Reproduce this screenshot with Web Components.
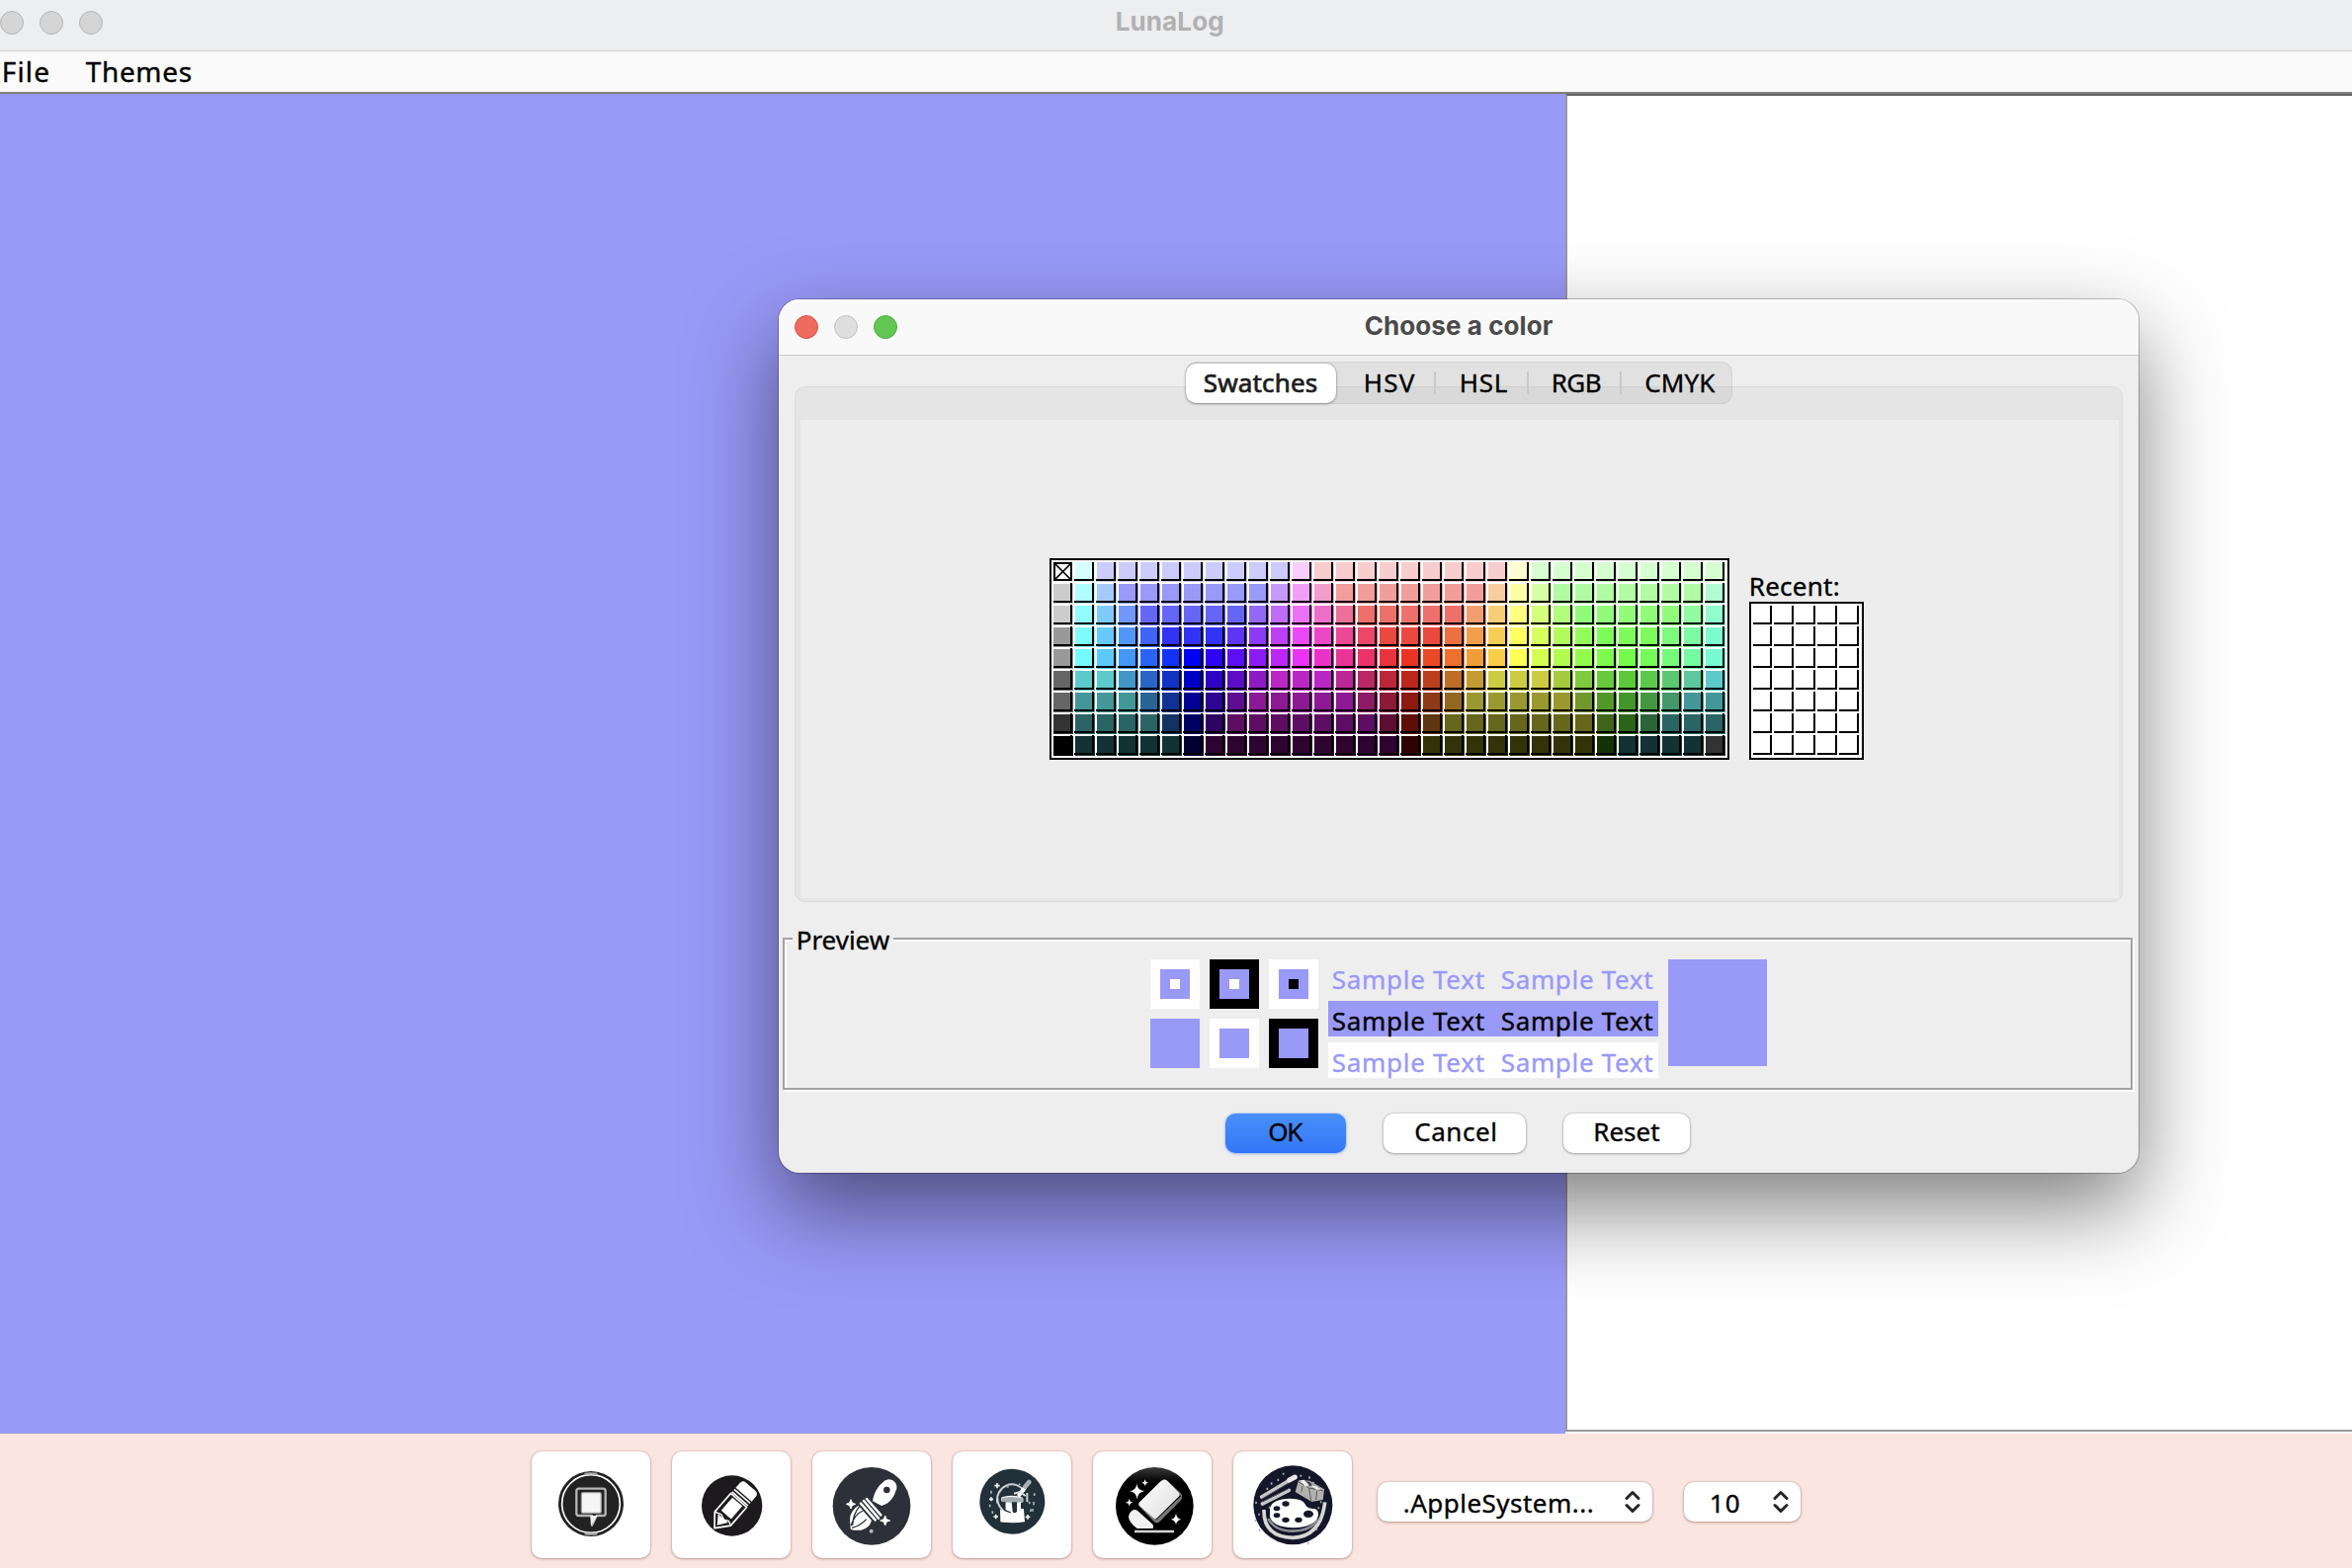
<!DOCTYPE html>
<html lang="en">
<head>
<meta charset="utf-8">
<title>LunaLog</title>
<style>
html,body{margin:0;height:100%;overflow:hidden;background:#fff}
body{font-family:"Noto Sans","Open Sans",sans-serif;font-size:26px;color:#000;-webkit-text-stroke:.35px}
</style>
</head>
<body>
<luna-app></luna-app>

<template id="t-app">
<style>
:host{display:flex;flex-direction:column;width:2380px;height:1587px;position:relative;overflow:hidden;--accent:#9999f8}
.work{flex:1;display:flex;min-height:0}
.canvas{width:1584px;background:var(--accent)}
.page{flex:1;background:#fff;box-sizing:border-box;border-left:2px solid #999;border-top:2px solid #666;margin-bottom:2px;border-bottom:2px solid #999}
color-dialog{position:absolute;left:788px;top:303px}
</style>
<main-title></main-title>
<menu-bar></menu-bar>
<div class="work"><div class="canvas"></div><div class="page"></div></div>
<tool-bar></tool-bar>
<color-dialog></color-dialog>
</template>

<template id="t-title">
<style>
:host{display:flex;height:52px;box-sizing:border-box;background:#edeef0;border-bottom:1px solid #cfd0d2;align-items:center;font:700 26px/36px Inter,sans-serif;color:#b1b1b2;-webkit-text-stroke:0}
window-dots{height:46px;align-self:flex-start}
fit-text{margin-left:1025px;margin-bottom:8px}
</style>
<window-dots off></window-dots>
<fit-text w="107.5">LunaLog</fit-text>
</template>

<template id="t-menu">
<style>
:host{display:flex;height:43px;box-sizing:border-box;background:#fafafa;border-bottom:2px solid #808080;font-size:28px;line-height:40px;padding-left:3px;gap:37.5px}
</style>
<fit-text w="45.5">File</fit-text><fit-text w="107">Themes</fit-text>
</template>

<template id="t-tools">
<style>
:host{display:flex;height:136px;box-sizing:border-box;background:#fae5e0;padding:18px 0 0 538px;gap:22px;align-items:flex-start}
pop-up{margin:31px 0 0 4px}
pop-up+pop-up{margin-left:10px}
</style>
<tool-button>
<svg viewBox="24 86 360 324"><circle cx="204" cy="245" r="99" fill="#222"/><circle cx="204" cy="245" r="88" fill="none" stroke="#fff" stroke-width="5"/><path d="M185 155q19-4 38 0M185 335q19 4 38 0" stroke="#aaa" stroke-width="7" fill="none"/><path d="M168 199h73q7 0 7 7v68q0 7-7 7h-20l-14 29v-29h-39q-8 0-8-7v-68q0-7 8-7z" fill="#222" stroke="#b5b5b5" stroke-width="7" stroke-linejoin="round"/><path d="M202 281h22l-20 30z" fill="#eee"/><rect x="175" y="211" width="60" height="62" rx="5" fill="#f5f5f5" stroke="#999" stroke-width="4"/></svg>
</tool-button>
<tool-button>
<svg viewBox="450 86 360 324"><circle cx="632" cy="251" r="92" fill="#1c1a1c"/><g transform="translate(579 319) rotate(-49)" stroke="#fff" stroke-linejoin="round"><path d="M0 0L38-32H112V32H38z" fill="#1c1a1c" stroke-width="5"/><path d="M12 0L40-20V20z" fill="#fff" stroke="none"/><path d="M54-20H106V20H54z" fill="#fff" stroke="none"/><path d="M38-32L45-11 38 5 45 18 38 32" fill="none" stroke-width="4"/><path d="M118-32V32M128-32V32" stroke-width="5"/><path d="M135-32H154Q167-32 167-18V18Q167 32 154 32H135z" fill="#fff" stroke="none"/></g></svg>
</tool-button>
<tool-button>
<svg viewBox="36 86 360 324"><circle cx="216" cy="252" r="118" fill="#2e3039"/><path d="M219 237C223 211 236 190 249 181A24 24 0 0 1 288 209C282 231 264 247 246 251z" fill="#fff"/><circle cx="262" cy="203" r="10" fill="#2e3039"/><path d="M201 230l43 49M192 236l45 53M183 244l44 50" stroke="#fff" stroke-width="7.500" stroke-linecap="round"/><path d="M176 250Q150 268 150 292L152 322Q164 327 184 325Q209 320 216 296z" fill="#fff"/><path d="M153 312Q165 276 190 266M156 318Q182 312 200 292M180 252Q160 275 158 310" stroke="#2e3039" stroke-width="4" fill="none"/><path d="M153 232l4 10 10 4-10 4-4 10-4-10-10-4 10-4zM257 281l4 11 11 4-11 4-4 11-4-11-11-4 11-4z" fill="#fff" stroke="#fff" stroke-width="3"/><circle cx="215" cy="328" r="6" fill="#b8b9bc"/></svg>
</tool-button>
<tool-button>
<svg viewBox="462 86 360 324"><circle cx="643" cy="238" r="99" fill="#223039"/><path d="M598 243A45 47 0 0 1 680 208M598 226Q598 262 634 276M688 212v28" fill="none" stroke="#ccd1d4" stroke-width="6"/><path d="M609 226q33-12 66 0l6 74q-37 6-74 0l-1-38 16 6v-32h-13z" fill="#fff"/><path d="M610 228q33-9 67 1v9q-34 7-67 0z" fill="#a4acb0"/><path d="M641 240h16v29q-9 8-13-1zM677 239h10v21h-18v-18z" fill="#223039"/><path d="M606 240l15 25 18 7M620 239v25" fill="none" stroke="#223039" stroke-width="4"/><path d="M664 218L681 196" stroke="#fff" stroke-width="12" stroke-linecap="round"/><path d="M682 193l12-14" stroke="#aab1b5" stroke-width="14" stroke-linecap="round"/><path d="M648 214l18-5 17 12" stroke="#dce0e2" stroke-width="6" fill="none"/><path d="M597 182v16M589 190h16M593 277v14M586 284h14M690 278v14M683 285h14M579 225v12M573 231h12" stroke="#eee" stroke-width="5"/><path d="M579 205v9m-4 33v8m8 12v8m127-62v8m-2 18v10m-3 11v8m-10-30v8m4 15v8m-37-83h5m-24-1h5m-22 9h6" stroke="#aab3b8" stroke-width="5"/></svg>
</tool-button>
<tool-button>
<svg viewBox="48 86 360 324"><defs><linearGradient id="e" x1="0" y1="0" x2="1" y2="1"><stop offset="0" stop-color="#fff"/><stop offset="1" stop-color="#ddd"/></linearGradient><linearGradient id="k" x1="0" y1="0" x2="0" y2="1"><stop offset="0" stop-color="#3a3a3a"/><stop offset=".2" stop-color="#000"/></linearGradient></defs><circle cx="235" cy="252" r="118" fill="url(#k)"/><path d="M192 238L254 176Q264 167 275 176L313 211Q322 220 316 233L250 300Q241 307 233 299L190 254Q184 246 192 238z" fill="#777"/><path d="M239 292L314 220" stroke="#111" stroke-width="4"/><path d="M191 238L254 177Q264 167 274 176L307 210Q313 217 307 224L241 289Q236 293 230 287L189 251Q184 245 191 238z" fill="url(#e)"/><path d="M163 269Q173 258 184 267L229 307Q234 315 229 320H182Q157 302 156 284Q156 276 163 269z" fill="#f1f1f1"/><path d="M174 329H294" stroke="#d4d4d4" stroke-width="7"/><path d="M181 184Q183 204 205 206Q184 209 182 231Q179 209 159 207Q179 204 181 184zM300 274Q302 290 316 292Q302 295 300 309Q298 295 284 292Q298 290 300 274zM158 230l3 8 8 3-8 3-3 8-3-8-8-3 8-3zM206 171l3 7 7 3-7 3-3 7-3-7-7-3 7-3z" fill="#fff"/></svg>
</tool-button>
<tool-button>
<svg viewBox="474 86 360 324"><circle cx="655" cy="249" r="120" fill="#14172a"/><path d="M567 263Q565 345 655 348Q740 345 752 240" fill="none" stroke="#d8d6d2" stroke-width="11"/><path d="M580 290Q600 328 655 328Q710 327 731 292" fill="none" stroke="#8d8d96" stroke-width="8"/><path d="M585 258Q593 230 646 229Q686 229 693 248Q698 260 719 260Q733 262 732 280Q724 315 657 318Q593 316 585 284z" fill="#fff"/><g fill="#14172a"><ellipse cx="633" cy="245" rx="11" ry="8"/><ellipse cx="606" cy="259" rx="10" ry="7"/><ellipse cx="606" cy="280" rx="10" ry="7"/><ellipse cx="633" cy="294" rx="11" ry="8"/><ellipse cx="672" cy="294" rx="11" ry="8"/><ellipse cx="702" cy="276" rx="15" ry="11"/></g><path d="M560 224L643 175M562 245L643 204" stroke="#c9c7c3" stroke-width="11" stroke-linecap="round"/><path d="M560 231L640 183M563 239L640 200" stroke="#4b4d5b" stroke-width="3"/><path d="M644 173l17-9" stroke="#e8e8e8" stroke-width="15" stroke-linecap="round"/><path d="M672 174l34 1 44 26-4 32-34 6-50-30z" fill="#b2b0ad"/><path d="M672 179l32 18 42 8M704 197l6 40M684 190l-3 20M728 205l-3 28" stroke="#5b5d66" stroke-width="3" fill="none"/><path d="M692 176l14 3 8 10-12 3zM722 190l14 6-8 8-12-6z" fill="#3b3d49"/><path d="M677 174l12-2 16 17-12 4zM711 190l16 2 12 9-13 2z" fill="#eee"/><path d="M590 180v7m20-18v7m-33 20v7m102-46v6m26-1v7m12 9v6m23 53v6m-7 12v6m-149-8v6m-41-21v7m9 29v6m-10 12v7m12 23v6m181-40v7m-8 24v6m-25 38v6M626 151v6m-20 33v5" stroke="#a9abb8" stroke-width="5"/></svg>
</tool-button>
<pop-up style="width:278px;--pad:26px"><fit-text w="191">.AppleSystem...</fit-text></pop-up>
<pop-up style="width:118px;--pad:27px"><fit-text w="28">10</fit-text></pop-up>
</template>

<template id="t-dialog">
<style>
:host{display:flex;flex-direction:column;width:1376px;height:884px;background:#eee;border-radius:21px;box-shadow:0 0 0 1px rgba(0,0,0,.24),0 36px 88px rgba(0,0,0,.5);overflow:hidden}
.bar{height:57px;box-sizing:border-box;flex:none;display:flex;align-items:center;background:#f9f9f9;border-bottom:1px solid #c8c8c8;box-shadow:inset 0 2px #fff;font:700 26px/36px Inter,sans-serif;color:#4a4a4a;padding-left:16px;-webkit-text-stroke:0}
.bar fit-text{margin-left:473px;margin-bottom:3px}
tab-strip{align-self:flex-start;margin:6px 0 0 412px;position:relative;z-index:1}
.pane{margin:-18px 16px 0;height:522px;flex:none;box-sizing:border-box;background:#e5e5e5;border:1px solid #dcdcdc;border-radius:10px;padding:33px 3px 3px 5px;display:flex}
.inner{flex:1;background:#ededed;display:flex;align-items:flex-start;padding:140px 0 0 252px;gap:20px}
.recent{display:flex;flex-direction:column;margin-top:12px}
.recent fit-text{line-height:32px;margin:0 0 0 1px}
preview-box{margin:24px 4px 0}
.actions{display:flex;margin:22px 0 0 452px;gap:38px}
</style>
<div class="bar"><window-dots></window-dots><fit-text w="190">Choose a color</fit-text></div>
<tab-strip></tab-strip>
<div class="pane"><div class="inner">
<swatch-grid kind="main"></swatch-grid>
<div class="recent"><fit-text w="89">Recent:</fit-text><swatch-grid kind="recent"></swatch-grid></div>
</div></div>
<preview-box></preview-box>
<div class="actions">
<push-button primary style="width:122px"><fit-text w="35">OK</fit-text></push-button>
<push-button style="width:144px"><fit-text w="81">Cancel</fit-text></push-button>
<push-button style="width:128px"><fit-text w="65">Reset</fit-text></push-button>
</div>
</template>

<template id="t-tabs">
<style>
:host{display:flex;height:43px;width:553px;background:rgba(0,0,0,.05);border-radius:11px;box-shadow:inset 0 0 0 1px rgba(0,0,0,.05);align-items:center}
div{display:flex;justify-content:center;height:43px;box-sizing:border-box;line-height:42px;align-items:flex-start}
.on{width:152px;height:40px;padding-right:2px;line-height:38px;background:#fff;border-radius:10px;box-shadow:0 0 2px rgba(0,0,0,.35),0 1px 3px rgba(0,0,0,.25);color:#1c1c1c;-webkit-text-stroke:.7px #1c1c1c}
.a{width:99px;padding-left:9px}.b{width:94px;padding-left:6px}.c{width:114px;padding-left:8px}
i{width:2px;height:23px;margin-right:-2px;background:#c9c9c9}
</style>
<div class="on"><fit-text w="114">Swatches</fit-text></div>
<div class="a"><fit-text w="50">HSV</fit-text></div><i></i>
<div class="b"><fit-text w="46">HSL</fit-text></div><i></i>
<div class="b"><fit-text w="48">RGB</fit-text></div><i></i>
<div class="c"><fit-text w="71">CMYK</fit-text></div>
</template>

<template id="t-preview">
<style>
:host{display:flex;height:168px;flex-direction:column;position:relative}
.edge{position:absolute;left:0;right:2px;top:12px;bottom:2px;border:2px solid #a3a3a3;box-sizing:border-box}
.light{position:absolute;left:2px;right:0;top:14px;bottom:0;border:2px solid #fff;box-sizing:border-box}
.cap{position:relative;align-self:flex-start;margin-left:10px;width:97px;height:34px;padding-left:5px;line-height:28px;background:#eee}
.row{position:relative;display:flex;margin:0 0 0 372px;align-items:flex-start}
.sq{display:grid;grid-template-columns:repeat(3,50px);grid-auto-rows:50px;gap:10px}
.sq div{box-sizing:border-box;border:10px solid var(--o);background:var(--accent);display:flex}
.sq i{width:10px;height:10px;margin:auto;background:var(--c)}
.lines{display:flex;flex-direction:column;gap:6px;margin-left:10px}
.lines div{width:334px;height:36px;line-height:40px;display:flex;box-sizing:border-box;padding-left:4px;gap:18px;color:var(--accent)}
.big{width:100px;height:108px;background:var(--accent);margin-left:10px}
</style>
<div class="light"></div><div class="edge"></div>
<div class="cap"><fit-text w="93">Preview</fit-text></div>
<div class="row">
<div class="sq">
<div style="--o:#fff;--c:#fff"><i></i></div><div style="--o:#000;--c:#fff"><i></i></div><div style="--o:#fff;--c:#000"><i></i></div>
<div style="--o:var(--accent)"></div><div style="--o:#fff"></div><div style="--o:#000"></div>
</div>
<div class="lines">
<div><fit-text w="153">Sample Text</fit-text><fit-text w="152.5">Sample Text</fit-text></div>
<div style="background:var(--accent);color:#000"><fit-text w="153">Sample Text</fit-text><fit-text w="152.5">Sample Text</fit-text></div>
<div style="background:#fff"><fit-text w="153">Sample Text</fit-text><fit-text w="152.5">Sample Text</fit-text></div>
</div>
<div class="big"></div>
</div>
</template>

<script>
const tpl = id => document.getElementById(id).content.cloneNode(true);
const define = (name, build) => customElements.define(name, class extends HTMLElement {
  constructor() { super(); this.attachShadow({ mode: 'open' }); }
  connectedCallback() { if (!this.shadowRoot.firstChild) build(this, this.shadowRoot); }
});

/* Text whose inked width is set through its w attribute; tracking absorbs the difference. */
const pen = document.createElement('canvas').getContext('2d');
define('fit-text', (el, root) => {
  root.innerHTML = '<style>:host{display:block;white-space:pre;flex:none}span{display:block}</style><span><slot></slot></span>';
  const cs = getComputedStyle(el), text = el.textContent, w = +el.getAttribute('w');
  pen.font = `${cs.fontWeight} ${cs.fontSize} ${cs.fontFamily}`;
  const m = pen.measureText(text);
  const ink = m.actualBoundingBoxLeft + m.actualBoundingBoxRight;
  const span = root.querySelector('span');
  el.style.width = w + 'px';
  span.style.marginLeft = (m.actualBoundingBoxLeft + .7) + 'px';
  span.style.letterSpacing = ((w - ink) / (text.length - 1)).toFixed(3) + 'px';
});

define('window-dots', (el, root) => {
  const off = el.hasAttribute('off');
  const c = off ? [['#d5d5d5', '#b4b5b6'], ['#d5d5d5', '#b4b5b6'], ['#d5d5d5', '#b4b5b6']]
                : [['#ed6b5f', '#dc5247'], ['#dedede', '#c2c2c2'], ['#62c655', '#50ae43']];
  root.innerHTML = `<style>:host{display:flex;gap:16px;align-items:center}i{width:24px;height:24px;box-sizing:border-box;border-radius:50%;border:1px solid}</style>` +
    c.map(([f, b]) => `<i style="background:${f};border-color:${b}"></i>`).join('');
});

define('push-button', (el, root) => {
  root.innerHTML = `<style>:host{display:flex;justify-content:center;height:40px;line-height:36px;background:#fff;border-radius:10px;box-shadow:0 0 2px rgba(0,0,0,.3),0 1px 3px rgba(0,0,0,.25)}
  :host([primary]){background:linear-gradient(#4a90f8,#3276f6);box-shadow:0 0 2px rgba(50,118,246,.5),0 1px 3px rgba(50,118,246,.35)}</style><slot></slot>`;
});

define('tool-button', (el, root) => {
  root.innerHTML = `<style>:host{display:block;width:120px;height:108px;background:#fff;border-radius:10px;box-shadow:0 0 2px rgba(90,30,20,.3),0 1px 3px rgba(90,30,20,.3)}
  ::slotted(svg){display:block;width:120px;height:108px}</style><slot></slot>`;
});

define('pop-up', (el, root) => {
  root.innerHTML = `<style>:host{display:flex;justify-content:space-between;box-sizing:border-box;height:40px;line-height:42px;padding:0 12px 0 var(--pad);background:#fff;border-radius:10px;box-shadow:0 0 2px rgba(90,30,20,.3),0 1px 3px rgba(90,30,20,.35)}
  svg{width:16px;height:24px;margin-top:8px}</style><slot></slot>
  <svg viewBox="0 0 16 24"><path d="M2 8.500 8 2.500l6 6M2 15.500l6 6 6-6" fill="none" stroke="#262626" stroke-width="3" stroke-linecap="round" stroke-linejoin="round"/></svg>`;
});

/* Palette rows as "rgb*count": each digit is a channel in steps of 51. */
const rows = [
  '555 455 445*9 545 544*9 554 454*9',
  '444 355 345 335*7 435 535 534 533*7 543 553 453 353*7 354',
  '444 255 245 235 225*5 325 425 525 524 523 522*5 532 542 552 452 352 252*5 253 254',
  '333 155 145 135 125 115*3 215 315 415 515 514 513 512 511*3 521 531 541 551 451 351 251 151*3 152 153 154',
  '333 055 045 035 025 015 005 105 205 305 405 505 504 503 502 501 500 510 520 530 540 550 450 350 250 150 050 051 052 053 054',
  '222 044*2 034 024 014 004 104 204 304 404*3 403 402 401 400 410 420 430 440*3 340 240 140 040 041 042 043 044',
  '222 033*3 023 013 003 103 203 303*5 302 301 300 310 320 330*5 230 130 030 031 032 033*2',
  '111 022*4 012 002 102 202*7 201 200 210 220*7 120 020 021 022*3',
  '000 011*5 001 101*9 100 110*8 010 011*4 111'
];
const lin = v => v <= .04045 ? v / 12.92 : ((v + .055) / 1.055) ** 2.4;
const enc = v => Math.round(255 * (v <= .0031308 ? v * 12.92 : 1.055 * v ** (1 / 2.4) - .055));
/* Wide-gamut display values of a palette entry. */
const shade = code => {
  const [r, g, b] = [...code].map(d => lin(d / 5));
  return `rgb(${enc(.8225 * r + .1774 * g)},${enc(.0332 * r + .9669 * g)},${enc(Math.min(1, .0171 * r + .0724 * g + .9108 * b))})`;
};
define('swatch-grid', (el, root) => {
  const main = el.getAttribute('kind') === 'main';
  const cells = main
    ? rows.flatMap(r => r.split(' ').flatMap(t => { const [c, n] = t.split('*'); return Array(+(n || 1)).fill(c); }))
    : Array(35).fill('555');
  const cols = main ? 31 : 5;
  root.innerHTML = `<style>:host{display:block;border:2px solid #000;background:#fff;padding:2px;flex:none}
  section{display:grid;grid-template-columns:repeat(${cols},20px);grid-auto-rows:20px;gap:2px;overflow:hidden}
  i{position:relative}
  i::after{content:"";position:absolute;left:-1px;top:-1px;width:18px;height:18px;border:solid #000;border-width:0 2px 2px 0}
  svg{display:block;width:19px;height:19px}</style><section>` +
    cells.map((c, n) => `<i style="background:${shade(c)}">${main && !n ? '<svg viewBox="0 0 19 19"><path d="M1 1h17v17H1z" fill="#fff" stroke="#000" stroke-width="2"/><path d="M2 2l15 15M17 2L2 17" stroke="#000" stroke-width="1.700"/></svg>' : ''}</i>`).join('') + '</section>';
});

for (const [n, id] of [['tab-strip', 't-tabs'], ['preview-box', 't-preview'], ['color-dialog', 't-dialog'], ['tool-bar', 't-tools'], ['menu-bar', 't-menu'], ['main-title', 't-title'], ['luna-app', 't-app']])
  define(n, (el, root) => root.append(tpl(id)));
</script>
</body>
</html>
